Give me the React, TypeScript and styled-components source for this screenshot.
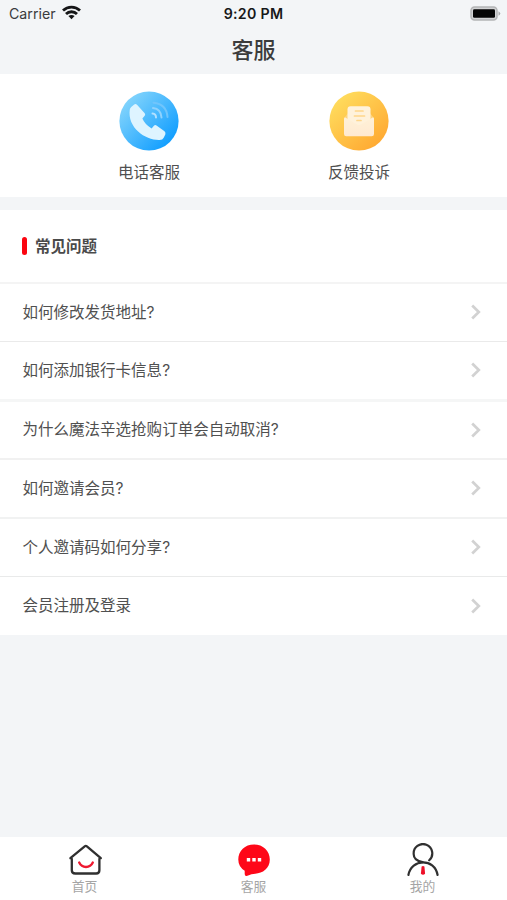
import React from "react";
import styled, { createGlobalStyle } from "styled-components";

const GlobalStyle = createGlobalStyle`
  * { box-sizing: border-box; }
  body {
    margin: 0;
    background: #f3f5f7;
    font-family: "Noto Sans CJK SC", sans-serif;
    color: #505050;
  }
`;

const Screen = styled.div`
  display: flex;
  flex-direction: column;
  width: 507px;
  height: 900px;
  overflow: hidden;
  background: #f3f5f7;
`;

const StatusBar = styled.div`
  display: grid;
  grid-template-columns: 1fr auto 1fr;
  align-items: center;
  height: 27px;
  padding: 0 6px 0 9px;
  font-family: Inter, sans-serif;
  font-size: 14.2px;
  color: #3a3b3d;
`;

const Carrier = styled.div`
  display: flex;
  align-items: center;
  gap: 6px;
  svg { display: block; margin-top: -2px; }
`;

const Time = styled.div`
  font-weight: 600;
  font-size: 14.2px;
  letter-spacing: 0.3px;
  color: #17181a;
  margin-left: -3px;
`;

const Battery = styled.div`
  display: flex;
  justify-content: flex-end;
`;

const Title = styled.h1`
  margin: 0;
  height: 47px;
  line-height: 43px;
  text-align: center;
  font-size: 22px;
  font-weight: 500;
  color: #3c3c3c;
`;

const Contacts = styled.section`
  display: flex;
  height: 123px;
  padding: 17px 43px 0 44px;
  background: #fff;
`;

const Contact = styled.div`
  flex: 1;
  display: flex;
  flex-direction: column;
  align-items: center;
  font-size: 15.5px;
  line-height: 24px;
  svg { display: block; margin-bottom: 8px; }
`;

const Faq = styled.section`
  margin-top: 13px;
  background: #fff;
`;

const FaqHeading = styled.h2`
  display: flex;
  align-items: center;
  gap: 8px;
  height: 72px;
  margin: 0;
  padding-left: 22px;
  font-size: 15.5px;
  font-weight: 700;
  color: #4a4a4a;
  span { margin-top: -2px; }
  &::before {
    content: "";
    width: 5px;
    height: 18px;
    border-radius: 2.5px;
    background: #fb0510;
  }
`;

const Question = styled.div<{ $line: number; $tone: string; $height: number }>`
  display: flex;
  align-items: center;
  justify-content: space-between;
  height: ${(p) => p.$height}px;
  padding: 0 25px 1px 22.5px;
  border-top: ${(p) => p.$line}px solid ${(p) => p.$tone};
  font-family: Inter, "Noto Sans CJK SC", sans-serif;
  font-size: 15.52px;
  line-height: 24px;
  span { margin-top: 1.5px; }
  svg { display: block; }
`;

const TabBar = styled.nav`
  display: flex;
  height: 63px;
  margin-top: auto;
  background: #fff;
`;

const Tab = styled.div`
  flex: 1;
  display: flex;
  flex-direction: column;
  align-items: center;
  padding-top: 6px;
  font-size: 12.8px;
  line-height: 18px;
  color: #a5a5a5;
  svg { display: block; }
`;

const questions = [
  { text: "如何修改发货地址?", line: 2, tone: "#f4f4f4", height: 59 },
  { text: "如何添加银行卡信息?", line: 1, tone: "#eaeaea", height: 58 },
  { text: "为什么魔法辛选抢购订单会自动取消?", line: 3, tone: "#f5f6f6", height: 59 },
  { text: "如何邀请会员?", line: 2, tone: "#f1f1f1", height: 59 },
  { text: "个人邀请码如何分享?", line: 2, tone: "#f1f2f2", height: 59 },
  { text: "会员注册及登录", line: 1, tone: "#e9eaea", height: 59 },
];

const WifiIcon = () => (
  <svg width="19" height="15" viewBox="0 0 19 15" fill="none" stroke="#151617" strokeWidth="2.8">
    <path d="M1 5.6C5.8 1 13.2 1 18 5.6" />
    <path d="M4 9C7 6 12 6 15 9" />
    <path d="M9.5 14.2L6.4 11.1Q9.5 8.7 12.6 11.1Z" fill="#151617" stroke="none" />
  </svg>
);

const BatteryIcon = () => (
  <svg width="31" height="15" viewBox="0 0 31 15">
    <rect x="1" y="1" width="26" height="13" rx="3.5" fill="#d2d3d4" stroke="#b4b5b6" strokeWidth="1.5" />
    <rect x="3" y="3.2" width="22" height="8.6" rx="1.3" fill="#050505" />
    <path d="M28.5 5.2Q32 7.5 28.5 9.8Z" fill="#a9aaab" />
  </svg>
);

const PhoneIcon = () => (
  <svg width="60" height="60" viewBox="0 0 60 60">
    <defs>
      <linearGradient id="blue" x1="0.1" y1="0.15" x2="0.85" y2="0.85">
        <stop stopColor="#83d4fc" />
        <stop offset="1" stopColor="#139fff" />
      </linearGradient>
    </defs>
    <circle cx="30" cy="30" r="29.6" fill="url(#blue)" />
    <path
      d="M12.2 16L15.2 13.4Q16.7 12.3 18 13.8L25.7 22.2Q26.7 23.4 25.7 24.7L23.4 27.6Q25.6 33.2 32.6 37.6L34.9 34.8Q36 33.5 37.5 34.4L45.5 40.2Q47 41.5 46.3 43.5L44.7 46.8Q43.7 49 40.6 49C27 49.5 8 37 10.8 18.5Q11 17 12.2 16Z"
      fill="#def4ff"
    />
    <g fill="none" strokeWidth="2" strokeLinecap="round">
      <path d="M33.5 22.5Q37 22.8 37 26.5" stroke="#b2e0ff" />
      <path d="M34 17Q42 18 42.5 26.5" stroke="#8fd2fd" />
      <path d="M34.5 11.7Q47.5 13 48.5 26" stroke="#70c5fc" />
    </g>
  </svg>
);

const LetterIcon = () => (
  <svg width="60" height="60" viewBox="0 0 60 60">
    <defs>
      <linearGradient id="amber" x1="0.15" y1="0.1" x2="0.85" y2="0.9">
        <stop stopColor="#ffdc5d" />
        <stop offset="1" stopColor="#ffa932" />
      </linearGradient>
      <linearGradient id="envelope" x1="0" y1="0" x2="0" y2="1">
        <stop stopColor="#fff1d7" />
        <stop offset="1" stopColor="#ffe9d1" />
      </linearGradient>
    </defs>
    <circle cx="30" cy="30" r="29.6" fill="url(#amber)" />
    <path d="M15 27L20 21H40L45 27V37H15Z" fill="#ffd47c" />
    <rect x="18.5" y="15.3" width="23" height="25" rx="3" fill="#fff2db" />
    <path d="M26.5 20H34M25.5 25H35.5M28 29.5H32" stroke="#ffd68a" strokeWidth="1.7" strokeLinecap="round" />
    <path d="M16.3 26.5L27.7 33.3Q30 34.5 32.3 33.3L43.7 26.5Q45 26 45 28V43Q45 45.3 42.7 45.3H17.3Q15 45.3 15 43V28Q15 26 16.3 26.5Z" fill="url(#envelope)" />
  </svg>
);

const Chevron = () => (
  <svg width="12" height="16" viewBox="0 0 12 16" fill="none" stroke="#d2d2d2" strokeWidth="2.7">
    <path d="M2.2 1.5L8.8 8L2.2 14.5" />
  </svg>
);

const HomeIcon = () => (
  <svg width="36" height="34" viewBox="0 0 36 34" fill="none" strokeLinecap="round" strokeLinejoin="round">
    <path d="M4.8 15.8V27.2Q4.8 30.5 8.2 30.5H29.2Q32.4 30.5 32.4 27.2V15.8L33.8 15.2L19.9 3.3Q18.8 2.4 17.7 3.3L3.4 15.2Z" stroke="#303030" strokeWidth="2.3" />
    <path d="M12.2 19.5C15 25.4 23 25.4 25.8 19.5" stroke="#ee1930" strokeWidth="2.4" />
  </svg>
);

const ChatIcon = () => (
  <svg width="36" height="34" viewBox="0 0 36 34">
    <path d="M18 1.4C27 1.4 33.8 7.6 33.8 16.5C33.8 25.4 26.6 30.4 19.2 30.7Q15 31 12.8 32.3L10.6 33Q8.7 33.2 8.7 31V27.7Q2.3 23.8 2.3 16.5C2.3 7.6 9 1.4 18 1.4Z" fill="#fe0718" />
    <path d="M10.8 15h3.4v3.6h-3.4ZM16.3 15h3.4v3.6h-3.4ZM21.8 15h3.4v3.6h-3.4Z" fill="#fff" />
  </svg>
);

const ProfileIcon = () => (
  <svg width="36" height="34" viewBox="0 0 36 34" fill="none" strokeLinecap="round">
    <path d="M17.5 19.2C10.8 17.8 8.7 14.3 8.7 11.2A9.3 9.3 0 1 1 24.2 17.3" stroke="#303030" strokeWidth="2.2" />
    <path d="M3.4 32C6.4 15.4 29.5 14.9 32.6 32" stroke="#303030" strokeWidth="2.2" />
    <path d="M16.6 23.4Q18 22.4 19.4 23.4L20.1 30.8Q18 32.5 15.9 30.8Z" fill="#ee1028" />
  </svg>
);

export default function App() {
  return (
    <>
      <GlobalStyle />
      <Screen>
        <StatusBar>
          <Carrier>Carrier <WifiIcon /></Carrier>
          <Time>9:20 PM</Time>
          <Battery><BatteryIcon /></Battery>
        </StatusBar>
        <Title>客服</Title>
        <Contacts>
          <Contact><PhoneIcon />电话客服</Contact>
          <Contact><LetterIcon />反馈投诉</Contact>
        </Contacts>
        <Faq>
          <FaqHeading><span>常见问题</span></FaqHeading>
          {questions.map((q) => (
            <Question key={q.text} $line={q.line} $tone={q.tone} $height={q.height}>
              <span>{q.text}</span>
              <Chevron />
            </Question>
          ))}
        </Faq>
        <TabBar>
          <Tab><HomeIcon />首页</Tab>
          <Tab><ChatIcon />客服</Tab>
          <Tab><ProfileIcon />我的</Tab>
        </TabBar>
      </Screen>
    </>
  );
}
